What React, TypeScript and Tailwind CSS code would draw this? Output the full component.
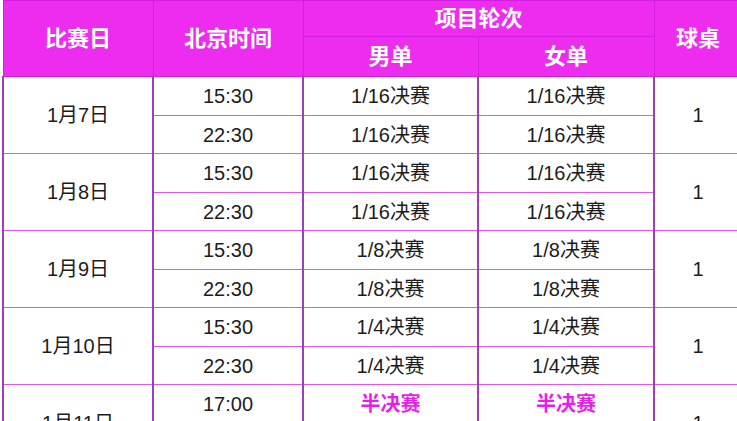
import React from 'react';

interface DayRow {
  date: string;
  slots: { time: string; men: string; women: string }[];
  table: string;
  highlight?: boolean;
}

const schedule: DayRow[] = [
  { date: '1月7日', table: '1', slots: [
    { time: '15:30', men: '1/16决赛', women: '1/16决赛' },
    { time: '22:30', men: '1/16决赛', women: '1/16决赛' },
  ] },
  { date: '1月8日', table: '1', slots: [
    { time: '15:30', men: '1/16决赛', women: '1/16决赛' },
    { time: '22:30', men: '1/16决赛', women: '1/16决赛' },
  ] },
  { date: '1月9日', table: '1', slots: [
    { time: '15:30', men: '1/8决赛', women: '1/8决赛' },
    { time: '22:30', men: '1/8决赛', women: '1/8决赛' },
  ] },
  { date: '1月10日', table: '1', slots: [
    { time: '15:30', men: '1/4决赛', women: '1/4决赛' },
    { time: '22:30', men: '1/4决赛', women: '1/4决赛' },
  ] },
  { date: '1月11日', table: '1', highlight: true, slots: [
    { time: '17:00', men: '半决赛', women: '半决赛' },
    { time: '22:30', men: '决赛', women: '决赛' },
  ] },
];

const head = 'bg-[#ee2cf0] text-white font-bold text-[22px] text-center align-middle border border-[#d21ee0]';
const cell = 'text-center align-middle text-[20px] text-[#1c1c1c] border-x-2 border-x-[#a23cbe] border-y border-y-[#dc5ae6]';

const App: React.FC = () => {
  return (
    <div className="w-[737px] h-[421px] overflow-hidden bg-white" style={{ fontFamily: '"Liberation Sans", "Noto Sans CJK SC", sans-serif' }}>
      <table className="ml-[2px] border-collapse table-fixed w-[739px]">
        <colgroup>
          <col className="w-[150px]" />
          <col className="w-[150px]" />
          <col className="w-[175px]" />
          <col className="w-[176px]" />
          <col className="w-[88px]" />
        </colgroup>
        <thead>
          <tr className="h-[36px]">
            <th rowSpan={2} className={head}>比赛日</th>
            <th rowSpan={2} className={head}>北京时间</th>
            <th colSpan={2} className={head}>项目轮次</th>
            <th rowSpan={2} className={head}>球桌</th>
          </tr>
          <tr className="h-[40px]">
            <th className={head}>男单</th>
            <th className={head}>女单</th>
          </tr>
        </thead>
        <tbody>
          {schedule.map((day) =>
            day.slots.map((slot, i) => (
              <tr key={day.date + slot.time} className={i === 0 ? 'h-[39px]' : 'h-[38px]'}>
                {i === 0 && <td rowSpan={2} className={cell}>{day.date}</td>}
                <td className={cell}>{slot.time}</td>
                <td className={day.highlight ? `${cell} !text-[#e81ee8] font-bold` : cell}>{slot.men}</td>
                <td className={day.highlight ? `${cell} !text-[#e81ee8] font-bold` : cell}>{slot.women}</td>
                {i === 0 && <td rowSpan={2} className={cell}>{day.table}</td>}
              </tr>
            ))
          )}
        </tbody>
      </table>
    </div>
  );
};

export default App;
